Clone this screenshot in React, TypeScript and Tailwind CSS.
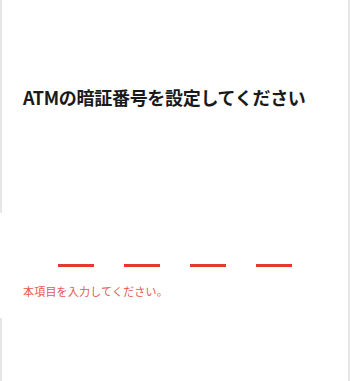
import React from "react";

export default function App() {
  return (
    <div
      className="flex h-[381px] w-[350px] bg-white"
      style={{ fontFamily: '"Noto Sans CJK JP", "Noto Sans", sans-serif' }}
    >
      <div className="flex w-[2px] flex-col">
        <div className="h-[213px] bg-[#e6e6e6]" />
        <div className="h-[105px]" />
        <div className="flex-1 bg-[#e6e6e6]" />
      </div>
      <div className="flex flex-1 flex-col border-r-2 border-[#e6e6e6]">
        <h1 className="mt-[84px] pl-[21px] text-[18px] font-bold leading-[26px] tracking-[-0.3px] text-[#1a1a1a]">
          ATMの暗証番号を設定してください
        </h1>
        <div className="mt-[154px] flex justify-center gap-[30px]">
          <div className="h-[3px] w-[36px] bg-[#e8382d]" />
          <div className="h-[3px] w-[36px] bg-[#e8382d]" />
          <div className="h-[3px] w-[36px] bg-[#e8382d]" />
          <div className="h-[3px] w-[36px] bg-[#e8382d]" />
        </div>
        <p className="mt-[16px] pl-[21px] text-[11px] leading-[16px] tracking-[0.2px] text-[#e8574d]">
          本項目を入力してください。
        </p>
      </div>
    </div>
  );
}
